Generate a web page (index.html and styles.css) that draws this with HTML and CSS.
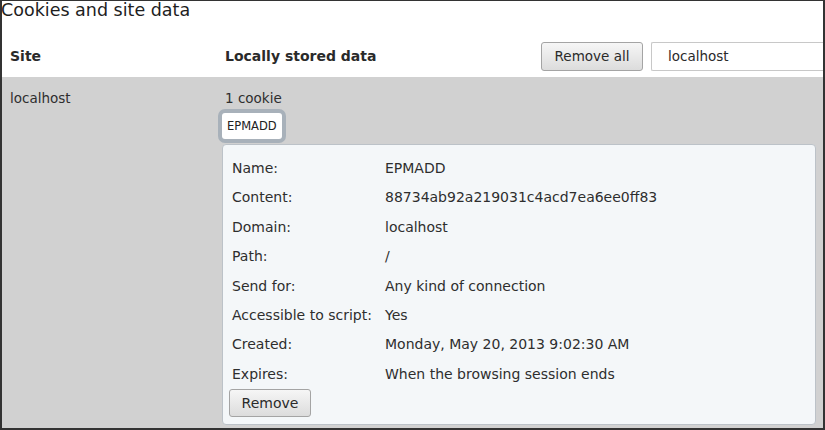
FILE: index.html
```html
<!DOCTYPE html>
<html>
<head>
<meta charset="utf-8">
<link rel="stylesheet" href="styles.css">
</head>
<body>
<div class="frame">
  <div class="title">Cookies and site data</div>
  <div class="head">
    <div class="col-site">Site</div>
    <div class="col-data">Locally stored data</div>
    <div class="tools">
      <button class="btn btn-all">Remove all</button>
      <input class="search" type="text" value="localhost">
    </div>
  </div>
  <div class="row">
    <div class="col-site">localhost</div>
    <div class="col-data">
      <div class="count">1 cookie</div>
      <div class="chips"><span class="chip">EPMADD</span></div>
      <div class="panel">
        <div class="props">
          <div class="k">Name:</div><div class="v">EPMADD</div>
          <div class="k">Content:</div><div class="v">88734ab92a219031c4acd7ea6ee0ff83</div>
          <div class="k">Domain:</div><div class="v">localhost</div>
          <div class="k">Path:</div><div class="v">/</div>
          <div class="k">Send for:</div><div class="v">Any kind of connection</div>
          <div class="k">Accessible to script:</div><div class="v">Yes</div>
          <div class="k">Created:</div><div class="v">Monday, May 20, 2013 9:02:30 AM</div>
          <div class="k">Expires:</div><div class="v">When the browsing session ends</div>
        </div>
        <button class="btn btn-remove">Remove</button>
      </div>
    </div>
  </div>
</div>
</body>
</html>
```

FILE: styles.css
```css
html, body {
  margin: 0;
  padding: 0;
  background: #ffffff;
}

body {
  font-family: "DejaVu Sans", "Liberation Sans", sans-serif;
  font-size: 13.5px;
  color: #2e2e2e;
}

.frame {
  width: 825px;
  height: 430px;
  box-sizing: border-box;
  border-top: 1px solid #333333;
  border-left: 2px solid #333333;
  border-right: 2px solid #333333;
  border-bottom: 2px solid #333333;
  display: flex;
  flex-direction: column;
  overflow: hidden;
  background: #ffffff;
}

.title {
  font-size: 17.5px;
  line-height: 22px;
  height: 22px;
  margin-top: -2px;
  margin-left: -1px;
  color: #1e1e1e;
}

.head {
  display: grid;
  grid-template-columns: 220px 1fr auto;
  align-items: center;
  height: 56px;
  box-sizing: border-box;
  padding-top: 20px;
  padding-bottom: 6px;
  font-weight: bold;
  font-size: 14px;
  color: #2a2a2a;
}

.head .col-site {
  padding-left: 8px;
}

.head .col-data {
  padding-left: 3px;
}

.tools {
  display: flex;
  gap: 8px;
  align-items: center;
  font-weight: normal;
}

.btn {
  font-family: "DejaVu Sans", "Liberation Sans", sans-serif;
  font-size: 13.5px;
  color: #2a2a2a;
  background: linear-gradient(#f6f6f6, #dcdcdc);
  border: 1px solid #a4a4a4;
  border-radius: 3px;
  box-sizing: border-box;
  padding: 0;
  margin: 0;
}

.btn-all {
  width: 102px;
  height: 29px;
}

.search {
  width: 172px;
  height: 29px;
  box-sizing: border-box;
  border: 1px solid #c8c8c8;
  border-right: none;
  border-radius: 2px 0 0 2px;
  padding: 0 0 0 16px;
  margin: 0;
  font-family: "DejaVu Sans", "Liberation Sans", sans-serif;
  font-size: 13.5px;
  color: #2a2a2a;
  background: #ffffff;
}

.row {
  flex: 1;
  display: grid;
  grid-template-columns: 220px 1fr;
  background: #d1d1d1;
  padding-top: 12px;
}

.row .col-site {
  padding-left: 8px;
  line-height: 19px;
}

.count {
  padding-left: 3px;
  line-height: 19px;
}

.chips {
  display: flex;
  align-items: flex-start;
  padding-top: 5px;
  height: 35px;
  box-sizing: border-box;
}

.chip {
  display: block;
  background: #ffffff;
  border-radius: 3px;
  box-shadow: 0 0 0 4px #a8b1ba;
  font-size: 11.5px;
  line-height: 26px;
  padding: 0 5px;
  color: #222222;
}

.panel {
  margin-top: 1px;
  width: 594px;
  box-sizing: border-box;
  background: #f4f7f9;
  border: 1px solid #bcc2c8;
  border-radius: 4px;
  padding: 9px 0 7px 6px;
}

.props {
  display: grid;
  grid-template-columns: 153px 1fr;
  line-height: 29.4px;
  padding-left: 3px;
  font-size: 14px;
}

.btn-remove {
  width: 82px;
  height: 28px;
  display: block;
  font-size: 14px;
}
```
